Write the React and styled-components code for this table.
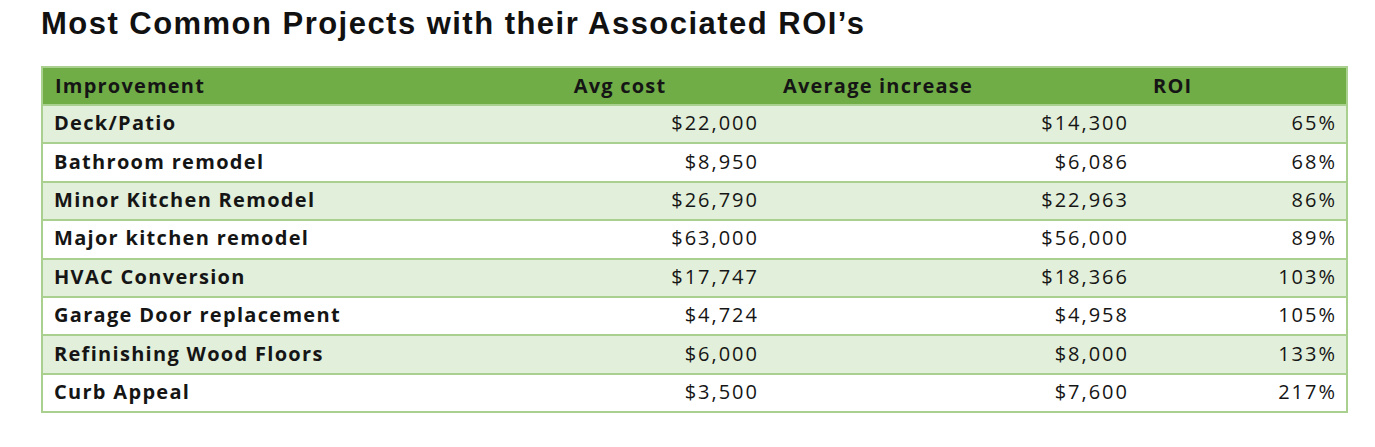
import React from "react";
import styled, { createGlobalStyle } from "styled-components";

const rows = [
  ["Deck/Patio", "$22,000", "$14,300", "65%"],
  ["Bathroom remodel", "$8,950", "$6,086", "68%"],
  ["Minor Kitchen Remodel", "$26,790", "$22,963", "86%"],
  ["Major kitchen remodel", "$63,000", "$56,000", "89%"],
  ["HVAC Conversion", "$17,747", "$18,366", "103%"],
  ["Garage Door replacement", "$4,724", "$4,958", "105%"],
  ["Refinishing Wood Floors", "$6,000", "$8,000", "133%"],
  ["Curb Appeal", "$3,500", "$7,600", "217%"],
];

export default function App() {
  return (
    <>
      <GlobalStyle />
      <Page>
        <Title>Most Common Projects with their Associated ROI’s</Title>
        <Table>
          <HeaderRow>
            <HeadCell $pad="12px">Improvement</HeadCell>
            <HeadCell $center>Avg cost</HeadCell>
            <HeadCell $pad="18px">Average increase</HeadCell>
            <HeadCell $pad="18px">ROI</HeadCell>
          </HeaderRow>
          {rows.map((r, i) => (
            <Row key={r[0]} $shade={i % 2 === 0} $last={i === rows.length - 1}>
              <NameCell>{r[0]}</NameCell>
              <NumCell>{r[1]}</NumCell>
              <NumCell>{r[2]}</NumCell>
              <NumCell $right="9px">{r[3]}</NumCell>
            </Row>
          ))}
        </Table>
      </Page>
    </>
  );
}

const GlobalStyle = createGlobalStyle`
  body {
    margin: 0;
    background: #fff;
  }
`;

const Page = styled.div`
  padding: 0 0 0 41px;
  width: 1307px;
`;

const Title = styled.h1`
  margin: 0;
  padding-top: 6px;
  height: 66px;
  box-sizing: border-box;
  font-family: "Liberation Sans", Arial, sans-serif;
  font-weight: bold;
  font-size: 31px;
  line-height: 36px;
  color: #111;
  letter-spacing: 1.47px;
  white-space: nowrap;
`;

const Table = styled.div`
  border: 2px solid #a9d08e;
  font-family: "Open Sans", Lato, sans-serif;
  font-size: 20px;
  color: #151515;
`;

const grid = `
  display: grid;
  grid-template-columns: 432px 290px 370px 211px;
  align-items: center;
  box-sizing: border-box;
`;

const HeaderRow = styled.div`
  ${grid}
  height: 38px;
  padding-bottom: 2px;
  background: #70ad47;
  border-bottom: 2px solid #a9d08e;
  font-weight: bold;
  letter-spacing: 1.2px;
`;

const HeadCell = styled.div`
  padding-left: ${(p) => p.$pad || "0"};
  text-align: ${(p) => (p.$center ? "center" : "left")};
  white-space: nowrap;
`;

const Row = styled.div`
  ${grid}
  height: ${(p) => (p.$last ? "36.4px" : "38.4px")};
  padding-bottom: 3px;
  background: ${(p) => (p.$shade ? "#e2efda" : "#fff")};
  border-bottom: ${(p) => (p.$last ? "none" : "2px solid #a9d08e")};
`;

const NameCell = styled.div`
  padding-left: 11px;
  font-weight: bold;
  white-space: nowrap;
  letter-spacing: 1.3px;
`;

const NumCell = styled.div`
  text-align: right;
  padding-right: ${(p) => p.$right || "6px"};
  white-space: nowrap;
  letter-spacing: 2px;
`;
